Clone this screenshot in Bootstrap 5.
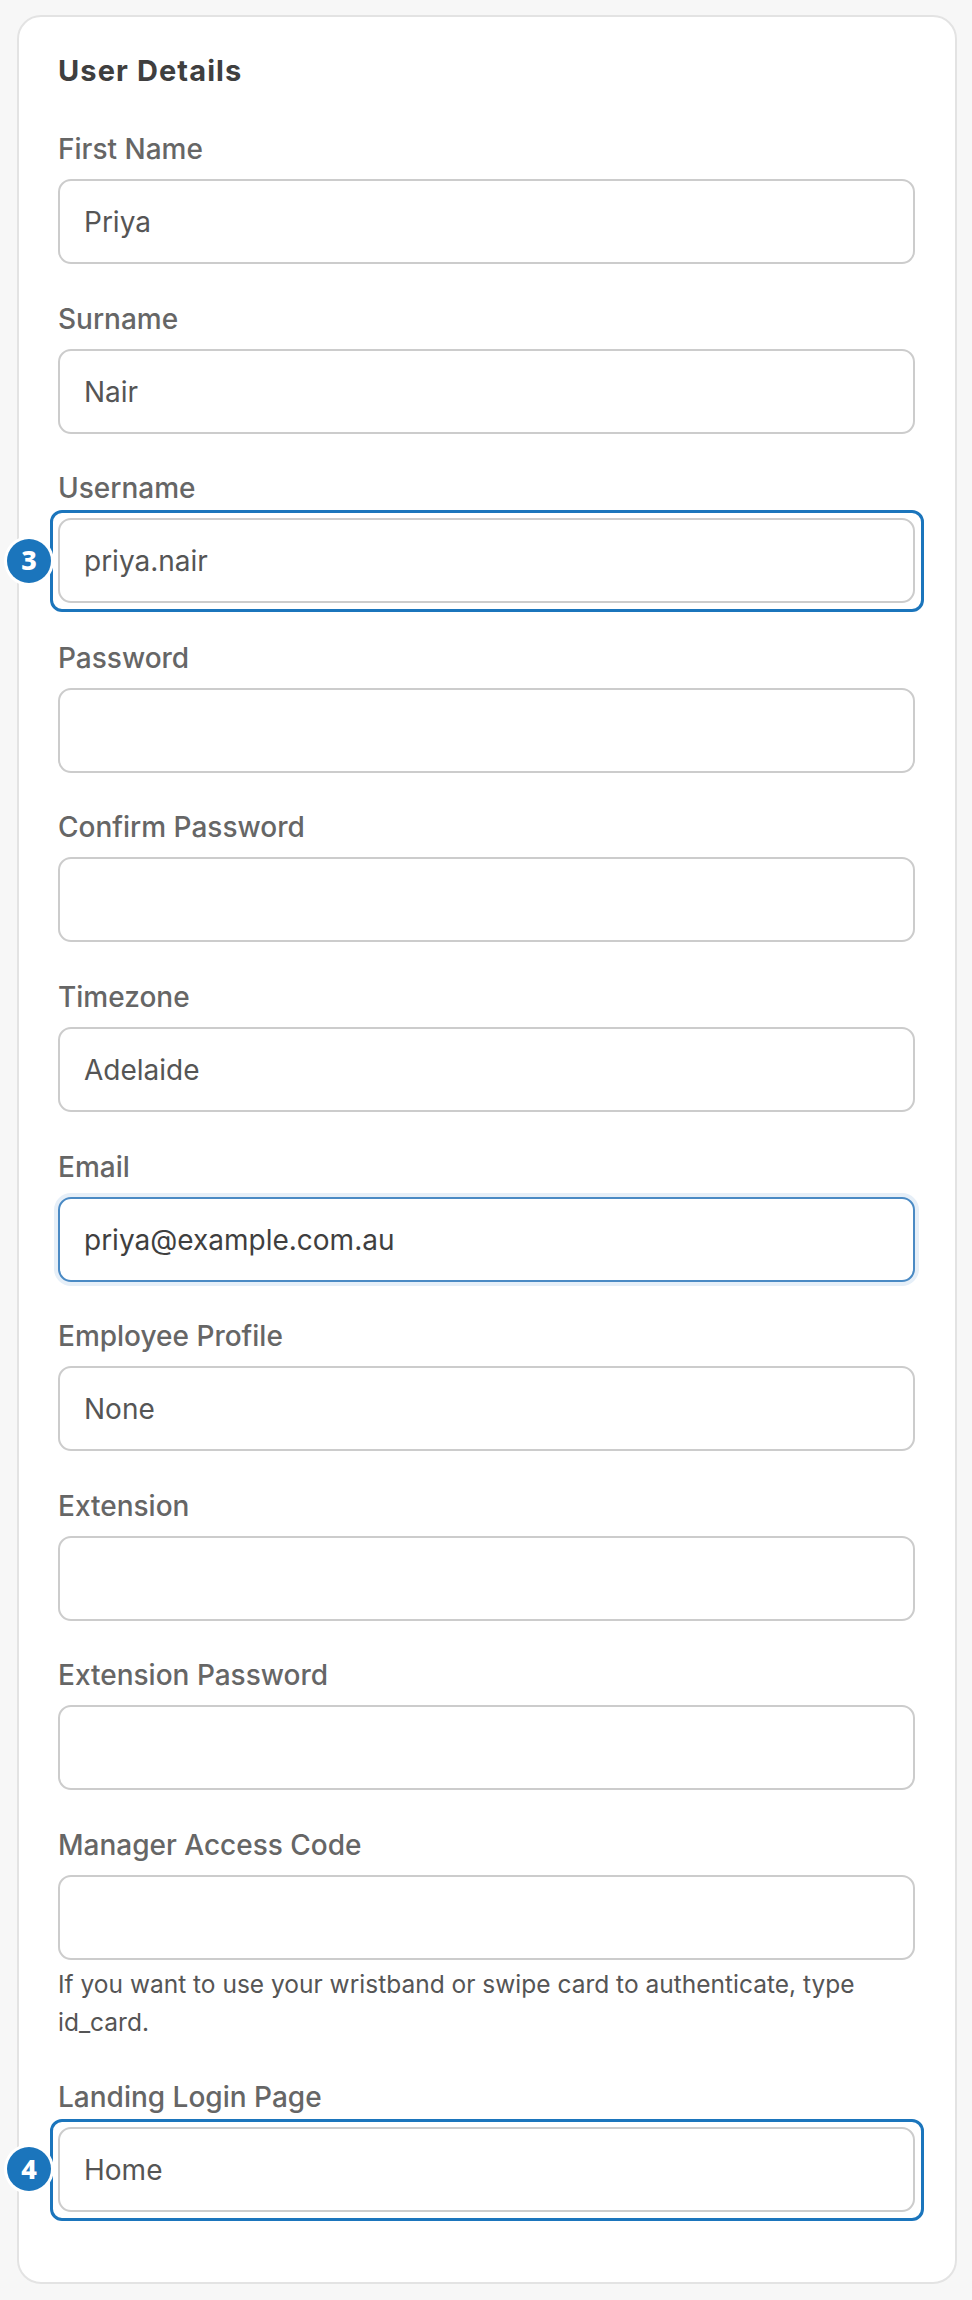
<!doctype html>
<html lang="en"><head><meta charset="utf-8">
<link href="https://cdn.jsdelivr.net/npm/bootstrap@5.3.0/dist/css/bootstrap.min.css" rel="stylesheet">
<style>
body{background:#f7f7f7;font-family:Inter,"Liberation Sans",sans-serif;color:#4a4a4a}
.shell{margin:15px 15px 0 17px;height:2269px;padding:36px 40px 0 39px;border:2px solid #e3e3e3;border-radius:24px;background:#fff}
.shell-title{font-family:Inter,sans-serif;font-weight:700;font-size:29px;letter-spacing:1.1px;line-height:36px;color:#3f3f3f;margin:0 0 40px}
.fld{margin-bottom:34.6px}
.fld-label{display:block;font-size:28px;line-height:40px;font-weight:500;color:#666;margin:0 0 10px}
.fld-input{height:85px;border:2px solid #ccc;border-radius:13px;font-size:28px;padding:1px 24px 0;color:#555}
.fld-input.on{border-color:#4a8ac4;box-shadow:0 0 0 4px #e6eff8;color:#3f3f3f}
.hint{font-size:24.5px;line-height:38.5px;margin:5px 0 0;color:#555}
.hilite{position:relative}
.hilite::before{content:"";position:absolute;inset:-8px -9px -9px -8px;border:3px solid #1b75bc;border-radius:12px;pointer-events:none}
.stepno{position:absolute;left:-51px;top:50%;transform:translateY(-50%);width:44px;height:44px;border-radius:50%;background:#1b75bc;box-shadow:0 0 0 3px #fff;color:#fff;font-family:"Noto Sans",sans-serif;font-weight:800;font-size:27px;z-index:2}
</style></head><body>
<div class="shell">
<h2 class="shell-title">User Details</h2>
<form>
<div class="fld"><label class="fld-label">First Name</label><input class="form-control fld-input" value="Priya"></div>
<div class="fld"><label class="fld-label">Surname</label><input class="form-control fld-input" value="Nair"></div>
<div class="fld"><label class="fld-label">Username</label><div class="hilite"><span class="stepno d-flex align-items-center justify-content-center">3</span><input class="form-control fld-input" value="priya.nair"></div></div>
<div class="fld"><label class="fld-label">Password</label><input class="form-control fld-input"></div>
<div class="fld"><label class="fld-label">Confirm Password</label><input class="form-control fld-input"></div>
<div class="fld"><label class="fld-label">Timezone</label><input class="form-control fld-input" value="Adelaide"></div>
<div class="fld"><label class="fld-label">Email</label><input class="form-control fld-input on" value="priya@example.com.au"></div>
<div class="fld"><label class="fld-label">Employee Profile</label><input class="form-control fld-input" value="None"></div>
<div class="fld"><label class="fld-label">Extension</label><input class="form-control fld-input"></div>
<div class="fld"><label class="fld-label">Extension Password</label><input class="form-control fld-input"></div>
<div class="fld"><label class="fld-label">Manager Access Code</label><input class="form-control fld-input"><div class="hint">If you want to use your wristband or swipe card to authenticate, type id_card.</div></div>
<div class="fld"><label class="fld-label">Landing Login Page</label><div class="hilite"><span class="stepno d-flex align-items-center justify-content-center">4</span><input class="form-control fld-input" value="Home"></div></div>
</form>
</div>
<script src="https://cdn.jsdelivr.net/npm/bootstrap@5.3.0/dist/js/bootstrap.bundle.min.js"></script>
</body></html>
